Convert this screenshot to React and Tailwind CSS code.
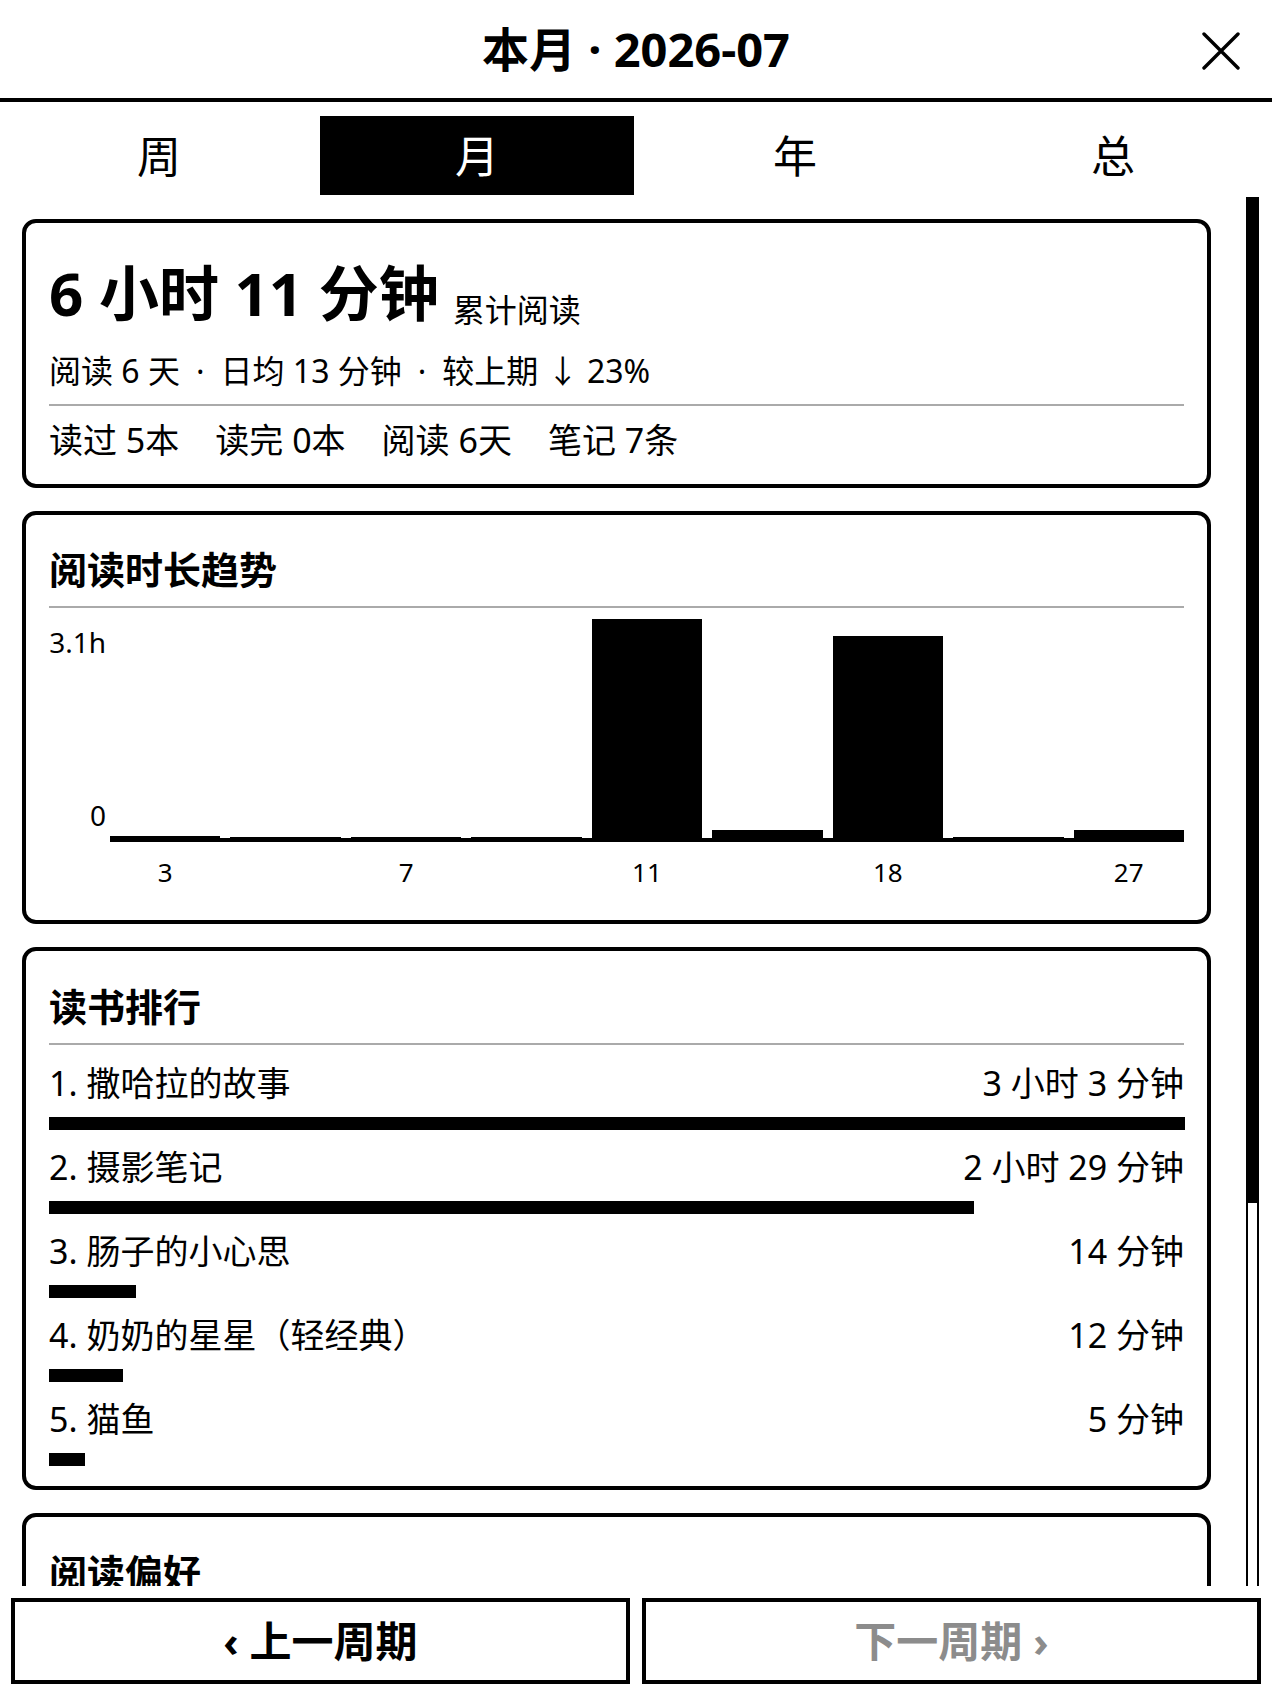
const bars = [
  { h: 2, label: '3' },
  { h: 1 },
  { h: 1, label: '7' },
  { h: 1 },
  { h: 219, label: '11' },
  { h: 8 },
  { h: 202, label: '18' },
  { h: 1 },
  { h: 8, label: '27' },
];

const ranking = [
  { name: '1. 撒哈拉的故事', time: '3 小时 3 分钟', min: 183 },
  { name: '2. 摄影笔记', time: '2 小时 29 分钟', min: 149 },
  { name: '3. 肠子的小心思', time: '14 分钟', min: 14 },
  { name: '4. 奶奶的星星（轻经典）', time: '12 分钟', min: 12 },
  { name: '5. 猫鱼', time: '5 分钟', min: 5 },
];

const tabs = ['周', '月', '年', '总'];

const summary = ['阅读 6 天', '日均 13 分钟', '较上期 ↓ 23%'];

const Card = ({ className = '', children }) => (
  <div className={`border-4 border-black rounded-[14px] px-[23px] ${className}`}>{children}</div>
);

const CardTitle = ({ children }) => (
  <>
    <h2 className="text-[38px] leading-none font-bold">{children}</h2>
    <div className="mt-[18px] h-[2px] bg-[#aaaaaa]" />
  </>
);

export default function App() {
  const maxMin = ranking[0].min;

  return (
    <div className="w-[1272px] h-[1696px] bg-white text-black flex flex-col overflow-hidden font-['Noto_Sans','Noto_Sans_CJK_SC',sans-serif]">
      {/* 标题栏 */}
      <header className="relative h-[102px] shrink-0 border-b-4 border-black flex items-center justify-center">
        <h1 className="text-[47px] leading-none font-bold">本月 · 2026-07</h1>
        <button className="absolute right-[32px] top-[32px] w-[38px] h-[38px]">
          <svg viewBox="0 0 38 38" className="w-full h-full" fill="none" stroke="black" strokeWidth="3.4" strokeLinecap="round">
            <path d="M2 2 L36 36 M36 2 L2 36" />
          </svg>
        </button>
      </header>

      {/* 周 / 月 / 年 / 总 */}
      <nav className="shrink-0 pt-[14px] grid grid-cols-4">
        {tabs.map((t) => (
          <div key={t} className="px-[2px]">
            <div
              className={`h-[79px] flex items-center justify-center text-[44px] leading-none ${
                t === '月' ? 'bg-black text-white' : ''
              }`}
            >
              {t}
            </div>
          </div>
        ))}
      </nav>

      {/* 内容区 */}
      <div className="h-[1391px] shrink-0 flex overflow-hidden">
        <div className="w-[1211px] shrink-0 pl-[22px] pt-[24px] flex flex-col gap-[23px]">
          {/* 累计阅读 */}
          <Card className="pt-[40px] pb-[27px]">
            <div className="flex items-end">
              <span className="text-[60px] leading-none font-bold">6 小时 11 分钟</span>
              <span className="ml-[14px] mb-[-3px] text-[32px] leading-none">累计阅读</span>
            </div>
            <p className="mt-[32px] text-[32px] leading-none flex">
              {summary.map((s, i) => (
                <span key={s} className="flex">
                  {i > 0 && <span className="mx-[16px]">·</span>}
                  {s}
                </span>
              ))}
            </p>
            <div className="mt-[17px] h-[2px] bg-[#aaaaaa]" />
            <div className="mt-[17px] flex gap-[36px] text-[34px] leading-none">
              <span>读过 5本</span>
              <span>读完 0本</span>
              <span>阅读 6天</span>
              <span>笔记 7条</span>
            </div>
          </Card>

          {/* 阅读时长趋势 */}
          <Card className="pt-[35px] pb-[35px]">
            <CardTitle>阅读时长趋势</CardTitle>
            <div className="mt-[8px] flex">
              <div className="w-[57px] mr-[4px] shrink-0 flex flex-col justify-between items-end pt-[12px] pb-[13px] text-[28px] leading-none">
                <span>3.1h</span>
                <span>0</span>
              </div>
              <div className="flex-1 h-[226px] border-b-4 border-black flex items-end gap-[10px]">
                {bars.map((b, i) => (
                  <div key={i} className="flex-1 bg-black" style={{ height: b.h }} />
                ))}
              </div>
            </div>
            <div className="mt-[17px] ml-[61px] flex gap-[10px] text-[26px] leading-none">
              {bars.map((b, i) => (
                <div key={i} className="flex-1 text-center">{b.label || ''}</div>
              ))}
            </div>
          </Card>

          {/* 读书排行 */}
          <Card className="pt-[36px] pb-[20px]">
            <CardTitle>读书排行</CardTitle>
            <div className="mt-[21px] flex flex-col gap-[20px]">
              {ranking.map((r) => (
                <div key={r.name}>
                  <div className="flex justify-between text-[34px] leading-none">
                    <span>{r.name}</span>
                    <span>{r.time}</span>
                  </div>
                  <div
                    className="mt-[17px] h-[13px] bg-black"
                    style={{ width: Math.max(36, Math.round((r.min / maxMin) * 1136)) }}
                  />
                </div>
              ))}
            </div>
          </Card>

          {/* 阅读偏好 */}
          <Card className="pt-[36px] pb-[40px]">
            <CardTitle>阅读偏好</CardTitle>
            <div className="h-[200px]" />
          </Card>
        </div>

        {/* 滚动条 */}
        <div className="ml-[35px] mt-[2px] w-[13px] shrink-0 border-x-2 border-t-2 border-black">
          <div className="h-[1004px] bg-black" />
        </div>
      </div>

      {/* 翻页 */}
      <footer className="shrink-0 pt-[12px] px-[11px] grid grid-cols-2 gap-[12px]">
        <button className="h-[86px] border-4 border-black flex items-center justify-center text-[42px] leading-none font-bold">
          ‹ 上一周期
        </button>
        <button className="h-[86px] border-4 border-black flex items-center justify-center text-[42px] leading-none font-bold text-[#8c8c8c]">
          下一周期 ›
        </button>
      </footer>
    </div>
  );
}
